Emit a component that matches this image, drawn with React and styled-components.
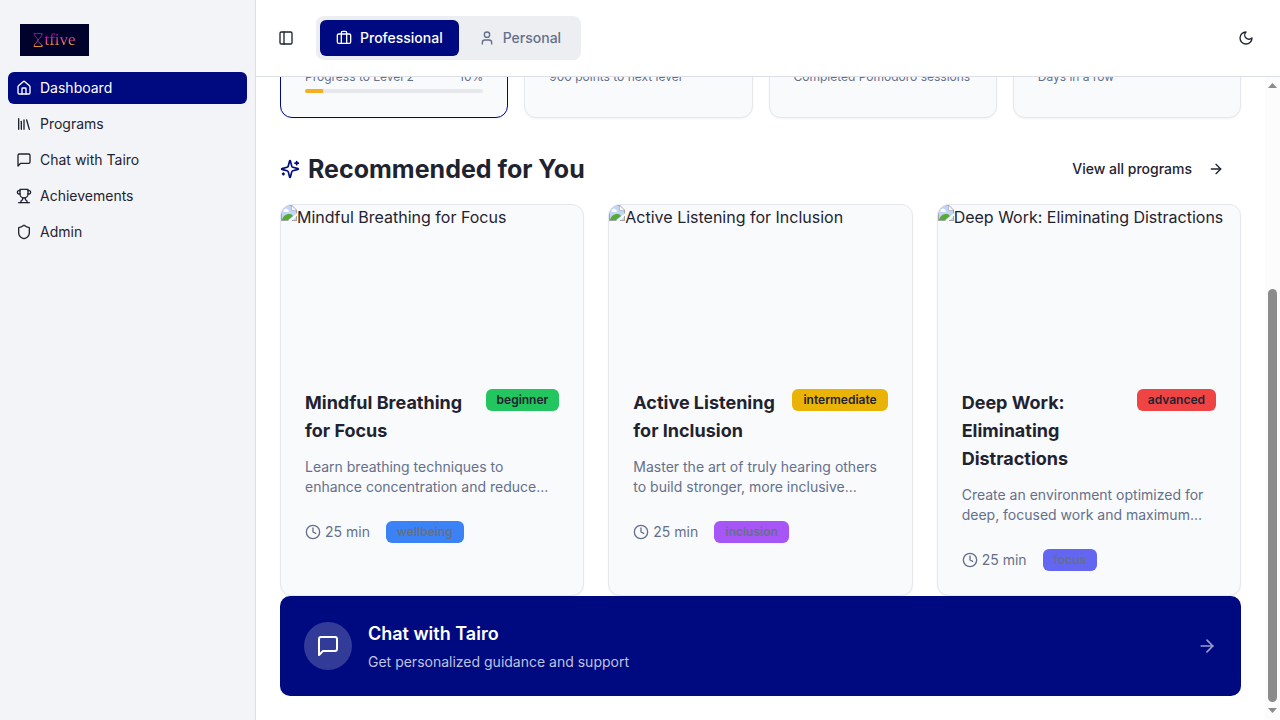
import React, { useLayoutEffect, useRef } from "react";
import styled, { createGlobalStyle } from "styled-components";
import { House, Library, Shield, PanelLeft, User, ArrowRight, Clock } from "lucide-react";

const navy = "#000a80";
const ink = "#1f2330";
const muted = "#64708b";
const line = "#e5e7eb";

const GlobalStyle = createGlobalStyle`
  *, *::before, *::after { box-sizing: border-box; }
  body {
    margin: 0;
    background: #ffffff;
    color: ${ink};
    font-family: Inter, "Liberation Sans", sans-serif;
    font-size: 16px;
    line-height: 24px;
  }
  h2, h3, p, ul { margin: 0; padding: 0; }
  button { font: inherit; color: inherit; background: none; border: 0; padding: 0; cursor: pointer; }
  a { color: inherit; text-decoration: none; }
  svg { display: block; flex: none; }
`;

function Glyph({ size = 16, children }) {
  return (
    <svg width={size} height={size} viewBox="0 0 24 24" fill="none" stroke="currentColor"
      strokeWidth="2" strokeLinecap="round" strokeLinejoin="round" aria-hidden="true">
      {children}
    </svg>
  );
}

const ChatIcon = (props) => (
  <Glyph {...props}>
    <path d="M21 15a2 2 0 0 1-2 2H7l-4 4V5a2 2 0 0 1 2-2h14a2 2 0 0 1 2 2z" />
  </Glyph>
);

const TrophyIcon = (props) => (
  <Glyph {...props}>
    <path d="M6 9H4.5a2.5 2.5 0 0 1 0-5H6" />
    <path d="M18 9h1.5a2.5 2.5 0 0 0 0-5H18" />
    <path d="M4 22h16" />
    <path d="M10 14.66V17c0 .55-.47.98-.97 1.21C7.85 18.75 7 20.24 7 22" />
    <path d="M14 14.66V17c0 .55.47.98.97 1.21C16.15 18.75 17 20.24 17 22" />
    <path d="M18 2H6v7a6 6 0 0 0 12 0V2Z" />
  </Glyph>
);

const BriefcaseIcon = (props) => (
  <Glyph {...props}>
    <path d="M16 20V4a2 2 0 0 0-2-2h-4a2 2 0 0 0-2 2v16" />
    <rect width="20" height="14" x="2" y="6" rx="2" />
  </Glyph>
);

const MoonIcon = (props) => (
  <Glyph {...props}>
    <path d="M12 3a6 6 0 0 0 9 9 9 9 0 1 1-9-9Z" />
  </Glyph>
);

const SparklesIcon = (props) => (
  <Glyph {...props}>
    <path d="M9.937 15.5A2 2 0 0 0 8.5 14.063l-6.135-1.582a.5.5 0 0 1 0-.962L8.5 9.936A2 2 0 0 0 9.937 8.5l1.582-6.135a.5.5 0 0 1 .963 0L14.063 8.5A2 2 0 0 0 15.5 9.937l6.135 1.581a.5.5 0 0 1 0 .964L15.5 14.063a2 2 0 0 0-1.437 1.437l-1.582 6.135a.5.5 0 0 1-.963 0z" />
    <path d="M20 3v4" />
    <path d="M22 5h-4" />
    <path d="M4 17v2" />
    <path d="M5 18H3" />
  </Glyph>
);

const MissingImageIcon = () => (
  <svg width="16" height="16" viewBox="0 0 16 16" aria-hidden="true">
    <path d="M0 0h11l5 5v11H0z" fill="#a3a3a3" />
    <path d="M1 1h9.5v4.5H15V15H1z" fill="#c3d5f6" />
    <path d="M11 1l4 4h-4z" fill="#ffffff" />
    <path d="M3 7a2 2 0 0 1 1-3 2 2 0 0 1 3 1 1 1 0 0 1 0 2z" fill="#ffffff" />
    <path d="M1 15c1-4 4-6 7-6s3 1 4 2l-5 4z" fill="#55ab35" />
    <path d="M16 8v3l-5 5H7z" fill="#f9fafc" />
    <path d="M15 11h1v5h-5v-1h4z" fill="#a3a3a3" />
  </svg>
);

const Shell = styled.div`
  display: flex;
  height: 100vh;
`;

const Sidebar = styled.aside`
  flex: none;
  width: 256px;
  padding: 24px 8px;
  background: #f2f4f8;
  border-right: 1px solid #dcdfe7;
`;

const Logo = styled.a`
  display: flex;
  align-items: center;
  justify-content: center;
  gap: 1px;
  width: 69px;
  height: 32px;
  margin: 0 12px 16px;
  background: #00022b;
`;

const LogoText = styled.span`
  font-family: "Liberation Serif", serif;
  font-size: 17px;
  line-height: 20px;
  color: transparent;
  background: linear-gradient(175deg, #b010a0 30%, #e0408a 50%, #f8a830 75%);
  background-clip: text;
  -webkit-background-clip: text;
  -webkit-text-stroke: 0;
`;

const NavList = styled.ul`
  display: flex;
  flex-direction: column;
  gap: 4px;
  list-style: none;
`;

const NavLink = styled.a`
  display: flex;
  align-items: center;
  gap: 8px;
  height: 32px;
  padding: 0 8px;
  border-radius: 6px;
  font-size: 14px;
  line-height: 20px;
  background: ${(p) => (p.$active ? navy : "transparent")};
  && { color: ${(p) => (p.$active ? "#ffffff" : ink)}; }
`;

const Content = styled.div`
  display: flex;
  flex-direction: column;
  flex: 1;
  min-width: 0;
`;

const Header = styled.header`
  display: flex;
  align-items: center;
  gap: 16px;
  padding: 16px;
  border-bottom: 1px solid #dcdfe7;
`;

const IconButton = styled.button`
  display: flex;
  align-items: center;
  justify-content: center;
  width: ${(p) => p.$size}px;
  height: ${(p) => p.$size}px;
  border-radius: 6px;
`;

const ModeSwitch = styled.div`
  display: flex;
  gap: 4px;
  margin-right: auto;
  padding: 4px;
  border-radius: 8px;
  background: #edeef2;
`;

const ModeButton = styled.button`
  display: flex;
  align-items: center;
  gap: 8px;
  height: 36px;
  padding: 0 16px;
  border-radius: 6px;
  font-size: 14px;
  font-weight: 500;
  line-height: 20px;
  background: ${(p) => (p.$active ? navy : "transparent")};
  color: ${(p) => (p.$active ? "#ffffff" : muted)};
`;

const ScrollArea = styled.div`
  display: flex;
  flex: 1;
  min-height: 0;
`;

const Main = styled.main`
  flex: 1;
  min-width: 0;
  padding: 24px;
  overflow-y: auto;
  scrollbar-width: none;
`;

const ScrollTrack = styled.div`
  display: flex;
  flex-direction: column;
  align-items: center;
  justify-content: space-between;
  width: 15px;
  padding: 6px 0 7px;
  background: #fcfcfc;
`;

const ScrollArrow = styled.svg`
  fill: #8b8b8b;
`;

const ScrollRail = styled.div`
  display: flex;
  flex-direction: column;
  justify-content: flex-end;
  flex: 1;
  padding: 6px 0;
`;

const ScrollThumb = styled.div`
  width: 9px;
  height: 68%;
  border-radius: 5px;
  background: #8b8b8b;
`;

const StatGrid = styled.div`
  display: grid;
  grid-template-columns: repeat(4, 1fr);
  gap: 16px;
`;

const StatCard = styled.section`
  padding: 24px;
  border: 1px solid ${(p) => (p.$active ? navy : line)};
  border-radius: 12px;
  background: #f9fafc;
  box-shadow: 0 1px 2px rgba(0, 0, 0, 0.05);
  color: ${muted};
  font-size: 12px;
  line-height: 16px;
`;

const StatRow = styled.div`
  display: flex;
  justify-content: space-between;
  margin-bottom: 4px;
`;

const ProgressTrack = styled.div`
  height: 4px;
  border-radius: 2px;
  background: #e7e8eb;
  overflow: hidden;
`;

const ProgressFill = styled.div`
  height: 100%;
  background: #f5ad22;
`;

const SectionHeader = styled.div`
  display: flex;
  align-items: center;
  justify-content: space-between;
  height: 38px;
  margin: 32px 0 16px;
`;

const SectionTitle = styled.h2`
  display: flex;
  align-items: center;
  gap: 8px;
  font-size: 25px;
  font-weight: 700;
  line-height: 32px;

  svg { color: ${navy}; }
`;

const ViewAll = styled.a`
  display: flex;
  align-items: center;
  gap: 16px;
  padding: 8px 17px;
  font-size: 14px;
  font-weight: 500;
  line-height: 20px;
`;

const ProgramGrid = styled.div`
  display: grid;
  grid-template-columns: repeat(3, 1fr);
  gap: 24px;
`;

const ProgramCard = styled.article`
  border: 1px solid ${line};
  border-radius: 12px;
  background: #f9fafc;
  box-shadow: 0 1px 2px rgba(0, 0, 0, 0.05);
  overflow: hidden;
`;

const Cover = styled.div`
  display: flex;
  align-items: flex-start;
  height: 160px;
  white-space: nowrap;
`;

const ProgramBody = styled.div`
  padding: 24px;
`;

const ProgramHead = styled.div`
  display: flex;
  align-items: flex-start;
  justify-content: space-between;
  gap: 8px;
`;

const ProgramTitle = styled.h3`
  font-size: 18px;
  font-weight: 700;
  line-height: 28px;
`;

const Badge = styled.span`
  flex: none;
  padding: 3px 11px;
  border-radius: 6px;
  font-size: 12px;
  font-weight: 600;
  line-height: 16px;
  background: ${(p) => p.$color};
`;

const Summary = styled.p`
  margin: 12px 0 24px;
  color: ${muted};
  font-size: 14px;
  line-height: 20px;
`;

const Meta = styled.div`
  display: flex;
  align-items: center;
  gap: 16px;
  color: ${muted};
  font-size: 14px;
  line-height: 20px;
`;

const Duration = styled.span`
  display: flex;
  align-items: center;
  gap: 4px;
`;

const ChatBanner = styled.a`
  display: flex;
  align-items: center;
  gap: 16px;
  padding: 24px;
  border-radius: 10px;
  background: ${navy};
  && { color: #ffffff; }
`;

const BannerIcon = styled.span`
  display: flex;
  align-items: center;
  justify-content: center;
  width: 48px;
  height: 48px;
  border-radius: 50%;
  background: rgba(255, 255, 255, 0.2);
`;

const BannerCopy = styled.div`
  display: flex;
  flex-direction: column;
  gap: 4px;
  flex: 1;
`;

const BannerTitle = styled.h3`
  font-size: 18px;
  font-weight: 600;
  line-height: 28px;
`;

const BannerText = styled.p`
  color: #bfc2df;
  font-size: 14px;
  line-height: 20px;
`;

const BannerArrow = styled.span`
  color: #999dcc;
`;

const navItems = [
  { label: "Dashboard", icon: <House size={16} />, active: true },
  { label: "Programs", icon: <Library size={16} /> },
  { label: "Chat with Tairo", icon: <ChatIcon /> },
  { label: "Achievements", icon: <TrophyIcon /> },
  { label: "Admin", icon: <Shield size={16} /> },
];

const stats = ["900 points to next level", "Completed Pomodoro sessions", "Days in a row"];

const levelProgress = 10;

const programs = [
  {
    title: "Mindful Breathing for Focus",
    level: "beginner",
    levelColor: "#22c55e",
    summary: "Learn breathing techniques to enhance concentration and reduce...",
    topic: "wellbeing",
    topicColor: "#3b82f6",
  },
  {
    title: "Active Listening for Inclusion",
    level: "intermediate",
    levelColor: "#eab308",
    summary: "Master the art of truly hearing others to build stronger, more inclusive...",
    topic: "inclusion",
    topicColor: "#a855f7",
  },
  {
    title: "Deep Work: Eliminating Distractions",
    level: "advanced",
    levelColor: "#ef4444",
    summary: "Create an environment optimized for deep, focused work and maximum...",
    topic: "focus",
    topicColor: "#6366f1",
  },
];

export default function App() {
  const mainRef = useRef(null);

  useLayoutEffect(() => {
    mainRef.current.scrollTop = mainRef.current.scrollHeight;
  }, []);

  return (
    <>
      <GlobalStyle />
      <Shell>
        <Sidebar>
          <Logo href="#">
            <svg width="10" height="16" viewBox="0 0 10 16" aria-hidden="true">
              <defs>
                <linearGradient id="glass" x1="0" y1="0" x2="0" y2="1">
                  <stop offset="0" stopColor="#7d0f9c" />
                  <stop offset="0.6" stopColor="#b82a80" />
                  <stop offset="1" stopColor="#e08a3a" />
                </linearGradient>
              </defs>
              <path d="M9 3V1.500H1C1 5 5 6 5 8S1 11 1 14.500H9V13M9 1.500C9 4 7 6 5 8s4 3 4 6.500"
                fill="none" stroke="url(#glass)" />
            </svg>
            <LogoText>tfive</LogoText>
          </Logo>
          <nav>
            <NavList>
              {navItems.map((item) => (
                <li key={item.label}>
                  <NavLink href="#" $active={item.active}>
                    {item.icon}
                    {item.label}
                  </NavLink>
                </li>
              ))}
            </NavList>
          </nav>
        </Sidebar>

        <Content>
          <Header>
            <IconButton $size={28} type="button" aria-label="Toggle sidebar">
              <PanelLeft size={16} />
            </IconButton>
            <ModeSwitch>
              <ModeButton type="button" $active>
                <BriefcaseIcon />
                Professional
              </ModeButton>
              <ModeButton type="button">
                <User size={16} />
                Personal
              </ModeButton>
            </ModeSwitch>
            <IconButton $size={36} type="button" aria-label="Toggle theme">
              <MoonIcon />
            </IconButton>
          </Header>

          <ScrollArea>
            <Main ref={mainRef}>
              <StatGrid>
                <StatCard $active>
                  <StatRow>
                    <span>Progress to Level 2</span>
                    <span>{levelProgress}%</span>
                  </StatRow>
                  <ProgressTrack>
                    <ProgressFill style={{ width: `${levelProgress}%` }} />
                  </ProgressTrack>
                </StatCard>
                {stats.map((text) => (
                  <StatCard key={text}>{text}</StatCard>
                ))}
              </StatGrid>

              <SectionHeader>
                <SectionTitle>
                  <SparklesIcon size={20} />
                  Recommended for You
                </SectionTitle>
                <ViewAll href="#">
                  View all programs
                  <ArrowRight size={16} />
                </ViewAll>
              </SectionHeader>

              <ProgramGrid>
                {programs.map((program) => (
                  <ProgramCard key={program.title}>
                    <Cover>
                      <MissingImageIcon />
                      {program.title}
                    </Cover>
                    <ProgramBody>
                      <ProgramHead>
                        <ProgramTitle>{program.title}</ProgramTitle>
                        <Badge $color={program.levelColor}>{program.level}</Badge>
                      </ProgramHead>
                      <Summary>{program.summary}</Summary>
                      <Meta>
                        <Duration>
                          <Clock size={16} />
                          25 min
                        </Duration>
                        <Badge $color={program.topicColor}>{program.topic}</Badge>
                      </Meta>
                    </ProgramBody>
                  </ProgramCard>
                ))}
              </ProgramGrid>

              <ChatBanner href="#">
                <BannerIcon>
                  <ChatIcon size={24} />
                </BannerIcon>
                <BannerCopy>
                  <BannerTitle>Chat with Tairo</BannerTitle>
                  <BannerText>Get personalized guidance and support</BannerText>
                </BannerCopy>
                <BannerArrow>
                  <ArrowRight size={20} />
                </BannerArrow>
              </ChatBanner>
            </Main>

            <ScrollTrack aria-hidden="true">
              <ScrollArrow width="9" height="5" viewBox="0 0 9 5">
                <path d="M0 5L4.500 0L9 5z" />
              </ScrollArrow>
              <ScrollRail>
                <ScrollThumb />
              </ScrollRail>
              <ScrollArrow width="9" height="5" viewBox="0 0 9 5">
                <path d="M0 0L4.500 5L9 0z" />
              </ScrollArrow>
            </ScrollTrack>
          </ScrollArea>
        </Content>
      </Shell>
    </>
  );
}
